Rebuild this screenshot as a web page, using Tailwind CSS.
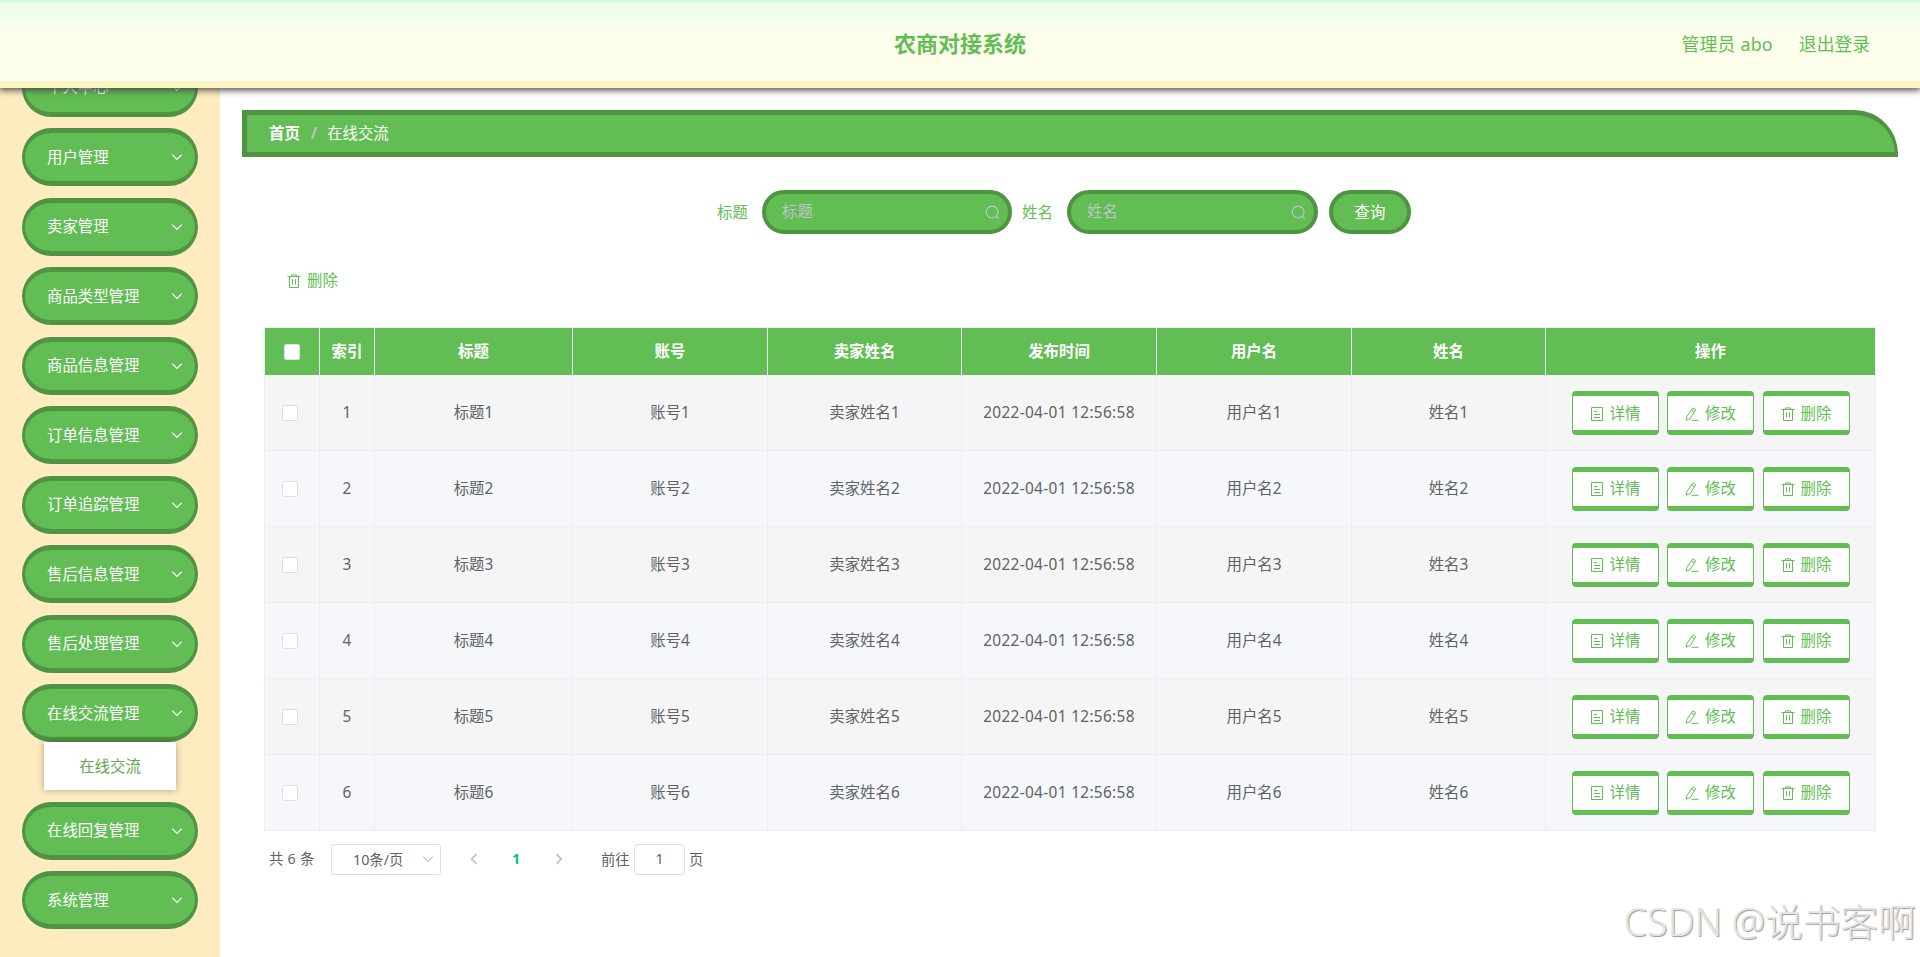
<!DOCTYPE html>
<html lang="zh-CN">
<head>
<meta charset="utf-8">
<title>农商对接系统</title>
<script src="https://cdn.jsdelivr.net/npm/@tailwindcss/browser@4"></script>
</head>
<body class="h-[957px] w-[1920px] overflow-hidden bg-white font-['Noto_Sans','Noto_Sans_CJK_SC',sans-serif] text-[15.4px] text-[#606266]">
<svg class="hidden">
  <symbol id="down" viewBox="0 0 12 12"><path d="M1.2 3.6 6 8.4l4.8-4.8" fill="none" stroke="currentColor" stroke-width="1.2"/></symbol>
  <symbol id="trash" viewBox="0 0 14 14"><path d="M.5 2.5h13M4.5 2.5V.9h5v1.6M2.5 2.5v11h9v-11M5.5 5.2v5.3M8.5 5.2v5.3" fill="none" stroke="currentColor" stroke-width="1"/></symbol>
  <symbol id="doc" viewBox="0 0 14 14"><path d="M1.5.5h11v13h-11zM4 4.5h3M4 7.5h6M4 10.5h6" fill="none" stroke="currentColor" stroke-width="1"/></symbol>
  <symbol id="edit" viewBox="0 0 14 14"><path d="M7.8.9 10.8 2.7 5.2 11.6 1.2 13.2 1.8 9.6zM6.6 3l3 1.8M6.5 13.3h7" fill="none" stroke="currentColor" stroke-width="1"/></symbol>
  <symbol id="search" viewBox="0 0 16 16"><path d="M7.6 1.2a6.3 6.3 0 1 0 0 12.6 6.3 6.3 0 0 0 0-12.6zM12 12l2.6 2.6" fill="none" stroke="currentColor" stroke-width="1.2"/></symbol>
</svg>

<div class="flex h-full flex-col">
  <header class="relative z-10 grid h-[88px] shrink-0 grid-cols-[1fr_auto_1fr] items-center border-t-2 border-b-[7px] border-t-[#d5fddc] border-b-[#fdf4c4] bg-linear-to-b from-[#ebfde7] via-[#fdfeec] via-45% to-[#fdfee9] shadow-[0_1px_7px_1px_#444]">
    <div></div>
    <h1 class="pt-[2px] text-[22px] leading-[30px] font-bold text-[#62bd54]">农商对接系统</h1>
    <div class="flex justify-end gap-[26px] pt-[4px] pr-[50px] text-[17.8px] leading-[26px] text-[#62bd54]"><span class="tracking-[0.25px]">管理员 abo</span><span>退出登录</span></div>
  </header>

  <div class="flex min-h-0 flex-1">
    <aside class="w-[220px] shrink-0 overflow-hidden bg-[#ffebc0] px-[22px]">
      <nav id="menu" class="-mt-[29.5px] flex flex-col"></nav>
    </aside>

    <main class="min-w-0 flex-1 pt-[22px] pr-[22px] pl-[22px]">
      <div class="flex h-[47px] items-center rounded-tr-[44px] border-y-5 border-r-3 border-l-5 border-[#4f9443] bg-[#62bd54] pl-[22px] text-white">
        <b>首页</b><span class="mr-[10px] ml-[11px] font-bold text-[#c0c4cc]">/</span><span>在线交流</span>
      </div>

      <div class="mt-[33px] flex h-[44px] items-center pl-[475px] text-[#62bd54]">
        <span class="w-[45px] pt-px">标题</span>
        <div class="flex h-[44px] w-[250px] items-center justify-between rounded-[22px] border-x-4 border-y-4 border-[#4f9443] bg-[#62bd54] pr-[8px] pl-[16px] text-[#c0c4cc]"><span>标题</span><svg class="size-[15px]"><use href="#search"/></svg></div>
        <span class="ml-[10px] w-[45px] pt-px">姓名</span>
        <div class="flex h-[44px] w-[251px] items-center justify-between rounded-[22px] border-x-4 border-y-4 border-[#4f9443] bg-[#62bd54] pr-[8px] pl-[16px] text-[#c0c4cc]"><span>姓名</span><svg class="size-[15px]"><use href="#search"/></svg></div>
        <button class="ml-[11px] h-[44px] w-[82px] rounded-[22px] border-4 border-[#4f9443] bg-[#62bd54] pt-px text-white">查询</button>
      </div>

      <div class="mt-[36px] flex h-[22px] items-center gap-[6px] pl-[45px] text-[#62bd54]"><svg class="size-[14px]"><use href="#trash"/></svg><span>删除</span></div>

      <div class="mt-[35px] ml-[22px] w-[1612px] border-t border-l border-[#ebeef5]">
        <div class="grid h-[47px] grid-cols-[55px_55px_198px_195px_194px_195px_195px_194px_330px] bg-[#62bd54] text-center leading-[48px] font-bold text-white">
          <div class="flex items-center justify-center border-r border-[#ebeef5]"><span class="size-[16px] rounded-[2px] border border-[#dcdfe6] bg-white"></span></div>
          <div class="border-r border-[#ebeef5]">索引</div>
          <div class="border-r border-[#ebeef5]">标题</div>
          <div class="border-r border-[#ebeef5]">账号</div>
          <div class="border-r border-[#ebeef5]">卖家姓名</div>
          <div class="border-r border-[#ebeef5]">发布时间</div>
          <div class="border-r border-[#ebeef5]">用户名</div>
          <div class="border-r border-[#ebeef5]">姓名</div>
          <div class="border-r border-[#ebeef5]">操作</div>
        </div>
        <div id="rows"></div>
      </div>

      <div class="mt-[13.3px] flex h-[31px] items-center pl-[27px] text-[14.3px]">
        <span class="w-[62px] pb-[2px] tracking-[0.3px]">共 6 条</span>
        <div class="flex h-[31px] w-[110px] items-center justify-between rounded-[3px] border border-[#dcdfe6] pr-[6px] pl-[21px]"><span>10条/页</span><svg class="size-[12px] text-[#c0c4cc]"><use href="#down"/></svg></div>
        <svg class="ml-[29px] h-[12px] w-[8px]" viewBox="0 0 8 12"><path d="M6.5 1.2 1.7 6l4.8 4.8" fill="none" stroke="#c0c4cc" stroke-width="1.9"/></svg>
        <b class="ml-[34px] w-[9px] pb-[2px] text-[#00c292]">1</b>
        <svg class="ml-[34px] h-[12px] w-[8px]" viewBox="0 0 8 12"><path d="M1.5 1.2 6.3 6l-4.8 4.8" fill="none" stroke="#c0c4cc" stroke-width="1.9"/></svg>
        <span class="ml-[38px] w-[33px]">前往</span>
        <span class="flex h-[31px] w-[51px] items-center justify-center rounded-[4px] border border-[#dcdfe6] pb-[2px]">1</span>
        <span class="ml-[4px]">页</span>
      </div>
    </main>
  </div>
</div>

<div class="absolute right-[4px] bottom-[7px] text-[37.7px] leading-[56px] font-light whitespace-nowrap text-[#e4e4e4] [text-shadow:1px_1px_1px_#999]">CSDN @说书客啊</div>

<script>
const items = ['个人中心','用户管理','卖家管理','商品类型管理','商品信息管理','订单信息管理','订单追踪管理','售后信息管理','售后处理管理','在线交流管理','在线回复管理','系统管理'];
document.getElementById('menu').innerHTML = items.map(t => `
  <div class="mb-[11.5px]">
    <div class="flex h-[58px] items-center justify-between rounded-[29px] border-x-3 border-y-5 border-[#4f9443] bg-[#62bd54] pr-[12px] pl-[22px] text-white"><span class="pt-px">${t}</span><svg class="size-[12px]"><use href="#down"/></svg></div>
    ${t === '在线交流管理' ? '<div class="mx-[22px] h-[48px] bg-white text-center leading-[49px] text-[#62a84f] shadow-[0_0_7px_rgba(0,0,0,.3)]">在线交流</div>' : ''}
  </div>`).join('');

const button = (icon, text) => `<button class="flex h-[44px] w-[87px] items-center justify-center gap-[6px] rounded-[4px] border-x border-y-5 border-[#62bd54] bg-white pt-px text-[#62bd54]"><svg class="size-[14px]"><use href="#${icon}"/></svg><span>${text}</span></button>`;
document.getElementById('rows').innerHTML = [1,2,3,4,5,6].map(n => {
  const cells = [n, '标题'+n, '账号'+n, '卖家姓名'+n, '<span class="tracking-[0.33px]">2022-04-01 12:56:58</span>', '用户名'+n, '姓名'+n];
  return `<div class="grid h-[75.95px] grid-cols-[55px_55px_198px_195px_194px_195px_195px_194px_330px] border-b border-[#ebeef5] bg-[#f5f5f5] text-center leading-[76px] even:bg-[#f5f7fb]">
    <div class="flex items-center border-r border-[#ebeef5] pl-[17px]"><span class="size-[16px] rounded-[2px] border border-[#dcdfe6] bg-white"></span></div>
    ${cells.map(c => `<div class="h-[74px] border-r border-[#ebeef5]">${c}</div>`).join('').replaceAll('h-[74px] ', '')}
    <div class="flex items-center justify-center gap-[8.5px] border-r border-[#ebeef5] leading-[22px]">${button('doc','详情')}${button('edit','修改')}${button('trash','删除')}</div>
  </div>`;
}).join('');
</script>
</body>
</html>
